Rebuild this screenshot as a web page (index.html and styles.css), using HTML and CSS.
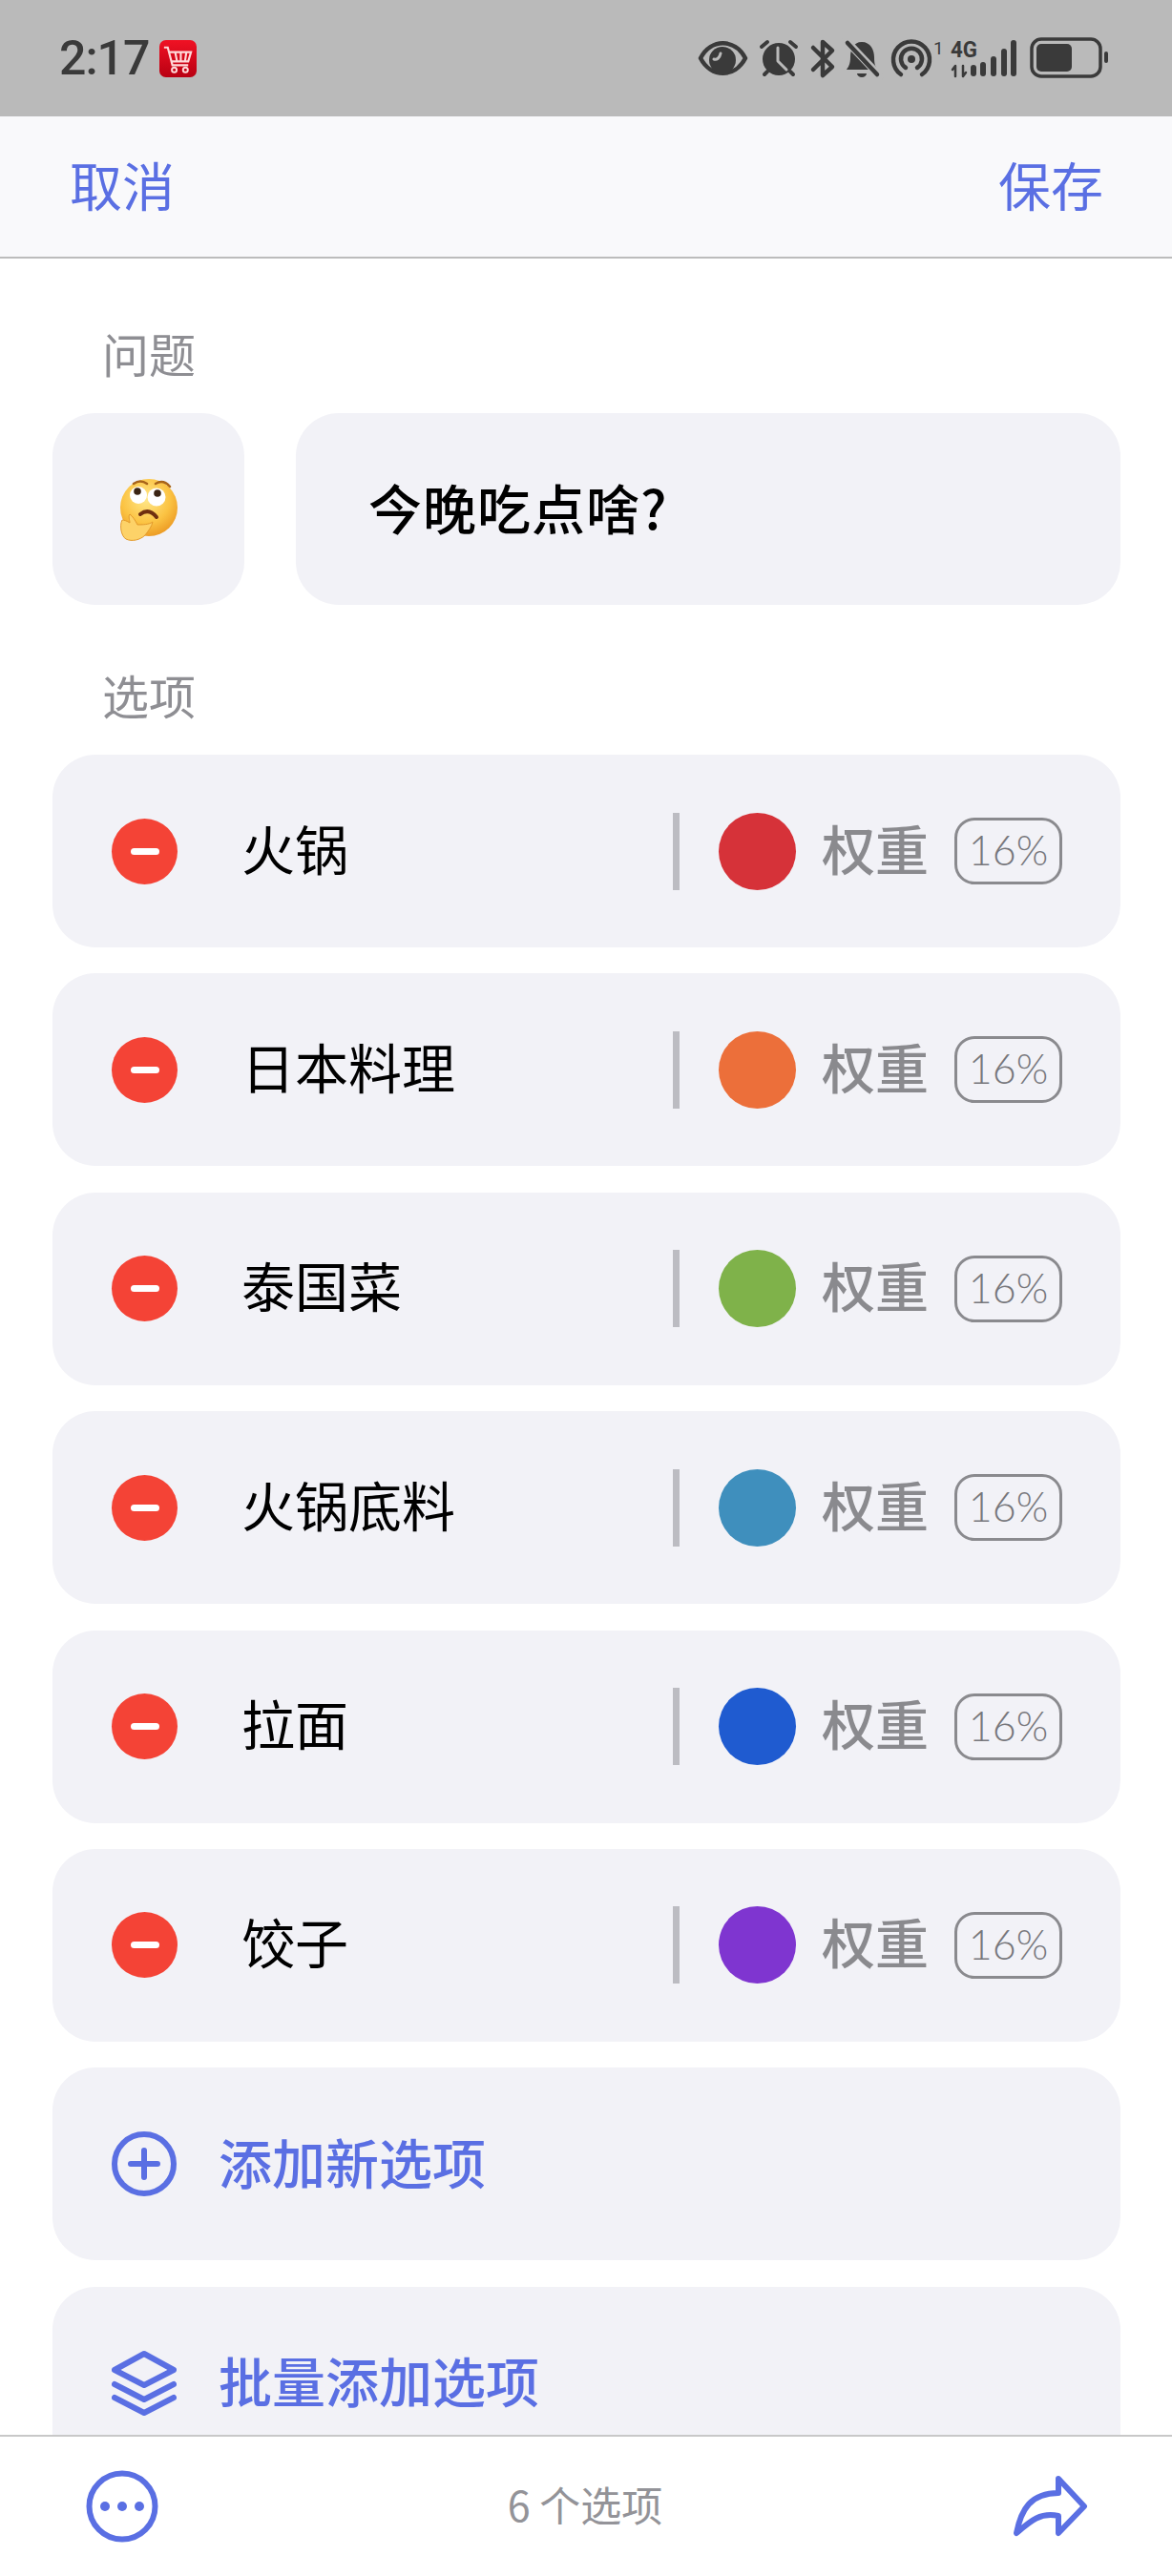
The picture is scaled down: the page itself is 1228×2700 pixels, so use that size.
FILE: index.html
```html
<!DOCTYPE html>
<html lang="zh-CN">
<head>
    <meta charset="UTF-8">
    <meta name="viewport" content="width=device-width, initial-scale=1.0">
    <title>编辑问题</title>
    <link rel="stylesheet" href="styles.css">
</head>
<body>
    <div class="page">
        <div class="status-bar">
            <span class="time">2:17</span>
            <svg class="cart-badge" viewBox="0 0 40 40">
                <defs>
                    <linearGradient id="cartRed" x1="0" y1="0" x2="0" y2="1">
                        <stop offset="0" stop-color="#f01224"/>
                        <stop offset="1" stop-color="#b90012"/>
                    </linearGradient>
                </defs>
                <rect width="40" height="40" rx="7" fill="url(#cartRed)"/>
                <path d="M5 8h4l5 19h17M11 13h23l-3 10H13.500M17 13l2 10M23 13v10M29 13l-1.500 10" fill="none" stroke="#ffd9d9" stroke-width="2.200"/>
                <circle cx="16" cy="32" r="2.600" fill="none" stroke="#ffd9d9" stroke-width="2"/>
                <circle cx="28" cy="32" r="2.600" fill="none" stroke="#ffd9d9" stroke-width="2"/>
            </svg>
            <svg class="status-icons" viewBox="728 38 437 46">
                <g fill="none" stroke="#3a3a3a" stroke-linecap="round" stroke-linejoin="round">
                    <!-- eye -->
                    <path d="M734 61C745 40 770 40 781 61C770 82 745 82 734 61Z" stroke-width="4.500"/>
                    <circle cx="757" cy="63" r="14" fill="#3a3a3a" stroke="none"/>
                    <path d="M748 62c3 1 6-1 7-6" stroke="#bababa" stroke-width="3"/>
                    <!-- alarm -->
                    <circle cx="816" cy="62" r="17" fill="#3a3a3a" stroke="none"/>
                    <path d="M815 50V64L824 73" stroke="#bababa" stroke-width="3"/>
                    <path d="M798 49L804 44M834 49L828 44M801 78L804 75M831 78L828 75" stroke-width="4"/>
                    <!-- bluetooth -->
                    <path d="M852 50L872 70L862 79V44L872 53L852 73" stroke-width="4.500"/>
                    <!-- muted bell -->
                    <path d="M903 44C894 44 891 52 891 60C891 67 889 70 887 73H920C917 70 916 67 916 60C916 52 912 44 903 44Z" fill="#3a3a3a" stroke="none"/>
                    <path d="M898 77a5 4 0 0 0 10 0" fill="#3a3a3a" stroke="none"/>
                    <path d="M886 42L922 80" stroke="#bababa" stroke-width="8"/>
                    <path d="M888 45L919 78" stroke-width="4.500"/>
                    <!-- hotspot -->
                    <path d="M944 78A19 19 0 1 1 966 78M949 71A11 11 0 1 1 961 71" stroke-width="4.500"/>
                    <circle cx="955" cy="62" r="4" fill="#3a3a3a" stroke="none"/>
                    <!-- data arrows -->
                    <path d="M1001 80V69L998 73M1009 69V80L1012 76" stroke-width="2.500"/>
                </g>
                <text x="978" y="57" class="status-small">1</text>
                <text x="996" y="60" class="status-net" textLength="28" lengthAdjust="spacingAndGlyphs">4G</text>
                <g fill="#3a3a3a">
                    <rect x="1017" y="68" width="6" height="12" rx="3"/>
                    <rect x="1027" y="65" width="6" height="15" rx="3"/>
                    <rect x="1038" y="59" width="6" height="21" rx="3"/>
                    <rect x="1049" y="51" width="6" height="29" rx="3"/>
                    <rect x="1059" y="42" width="6" height="38" rx="3"/>
                    <rect x="1086" y="46" width="37" height="29" rx="5"/>
                    <rect x="1157" y="54" width="4" height="12" rx="2"/>
                </g>
                <rect x="1081" y="41" width="72" height="39" rx="10" fill="none" stroke="#3a3a3a" stroke-width="3.500"/>
            </svg>
        </div>

        <div class="nav-bar">
            <span>取消</span>
            <span>保存</span>
        </div>

        <div class="content">
            <div class="section-label first">问题</div>
            <div class="question">
                <div class="card emoji-card">
                    <svg class="emoji" viewBox="0 0 64 66">
                        <defs>
                            <radialGradient id="face" cx="0.45" cy="0.35" r="0.7">
                                <stop offset="0" stop-color="#ffe88a"/>
                                <stop offset="0.6" stop-color="#fbc343"/>
                                <stop offset="1" stop-color="#ea951f"/>
                            </radialGradient>
                        </defs>
                        <circle cx="33" cy="31" r="30" fill="url(#face)"/>
                        <path d="M17 6q7-5 14 0M40 6q8-5 15 3" fill="none" stroke="#a8641a" stroke-width="2.500" stroke-linecap="round"/>
                        <circle cx="22" cy="18" r="9" fill="#fff"/>
                        <circle cx="41" cy="20" r="9.500" fill="#fff"/>
                        <circle cx="21" cy="14" r="3.800" fill="#3a2413"/>
                        <circle cx="42" cy="16" r="3.800" fill="#3a2413"/>
                        <path d="M24 38q9-7 17 3" fill="none" stroke="#6f2f10" stroke-width="4" stroke-linecap="round"/>
                        <path d="M5 44c-3 6-1 17 4 20c6 3 15 1 20-4c3-4 7-9 8-14c-4 3-11 3-16 3c-2-4-5-9-8-11c-2 2 0 6 0 9c-3-2-6-3-8-3z" fill="#fdd268" stroke="#e39a2c" stroke-width="1"/>
                    </svg>
                </div>
                <div class="card question-input">今晚吃点啥?</div>
            </div>

            <div class="section-label">选项</div>
            <div class="options">
                <div class="card option">
                    <span class="remove"></span>
                    <span class="option-name">火锅</span>
                    <span class="divider"></span>
                    <span class="swatch red"></span>
                    <span class="weight">权重</span>
                    <span class="percent">16%</span>
                </div>
                <div class="card option">
                    <span class="remove"></span>
                    <span class="option-name">日本料理</span>
                    <span class="divider"></span>
                    <span class="swatch orange"></span>
                    <span class="weight">权重</span>
                    <span class="percent">16%</span>
                </div>
                <div class="card option">
                    <span class="remove"></span>
                    <span class="option-name">泰国菜</span>
                    <span class="divider"></span>
                    <span class="swatch green"></span>
                    <span class="weight">权重</span>
                    <span class="percent">16%</span>
                </div>
                <div class="card option">
                    <span class="remove"></span>
                    <span class="option-name">火锅底料</span>
                    <span class="divider"></span>
                    <span class="swatch teal"></span>
                    <span class="weight">权重</span>
                    <span class="percent">16%</span>
                </div>
                <div class="card option">
                    <span class="remove"></span>
                    <span class="option-name">拉面</span>
                    <span class="divider"></span>
                    <span class="swatch blue"></span>
                    <span class="weight">权重</span>
                    <span class="percent">16%</span>
                </div>
                <div class="card option">
                    <span class="remove"></span>
                    <span class="option-name">饺子</span>
                    <span class="divider"></span>
                    <span class="swatch purple"></span>
                    <span class="weight">权重</span>
                    <span class="percent">16%</span>
                </div>
                <div class="card option action">
                    <svg class="action-icon" viewBox="0 0 68 68" fill="none" stroke="#5a6fe3" stroke-width="6" stroke-linecap="round">
                        <circle cx="34" cy="34" r="31"/>
                        <path d="M34 20V48M20 34H48"/>
                    </svg>
                    <span class="action-label">添加新选项</span>
                </div>
                <div class="card option action">
                    <svg class="action-icon" viewBox="0 0 68 68" fill="none" stroke="#5a6fe3" stroke-width="6" stroke-linecap="round" stroke-linejoin="round">
                        <path d="M34 3L65 20L34 36L3 20Z"/>
                        <path d="M3 35L34 51L65 35"/>
                        <path d="M3 49L34 65L65 49"/>
                    </svg>
                    <span class="action-label">批量添加选项</span>
                </div>
            </div>
        </div>

        <div class="bottom-bar">
            <svg class="more-icon" viewBox="0 0 76 76">
                <circle cx="38" cy="38" r="34.500" fill="none" stroke="#5a6fe3" stroke-width="6"/>
                <circle cx="20" cy="38" r="5" fill="#5a6fe3"/>
                <circle cx="38" cy="38" r="5" fill="#5a6fe3"/>
                <circle cx="56" cy="38" r="5" fill="#5a6fe3"/>
            </svg>
            <span class="count">6 个选项</span>
            <svg class="share-icon" viewBox="160 92 82 70">
                <path d="M209 98L236 127L209 155V137C190 133 180 142 165 155C170 130 180 113 209 113Z" fill="none" stroke="#5a6fe3" stroke-width="6" stroke-linejoin="round"/>
            </svg>
        </div>
    </div>
</body>
</html>
```

FILE: styles.css
```css
* {
    box-sizing: border-box;
}
body {
    margin: 0;
    background-color: #fff;
    font-family: "Noto Sans CJK SC", "Noto Sans", sans-serif;
    color: #000;
}
.page {
    width: 1228px;
    height: 2700px;
    display: flex;
    flex-direction: column;
    overflow: hidden;
}
.status-bar {
    height: 122px;
    flex-shrink: 0;
    background-color: #bababa;
    display: flex;
    align-items: center;
    padding-left: 62px;
}
.time {
    font-family: Roboto, sans-serif;
    font-size: 50px;
    font-weight: 500;
    letter-spacing: -1px;
    line-height: 50px;
    color: #3a3a3a;
    width: 105px;
}
.cart-badge {
    width: 39px;
    height: 39px;
}
.status-icons {
    width: 437px;
    height: 46px;
    margin-left: 522px;
}
.status-small {
    font-family: Roboto, sans-serif;
    font-size: 19px;
    fill: #3a3a3a;
}
.status-net {
    font-family: Roboto, sans-serif;
    font-size: 24px;
    font-weight: 700;
    fill: #3a3a3a;
}
.nav-bar {
    height: 149px;
    flex-shrink: 0;
    background-color: #f9f9fb;
    border-bottom: 2px solid #bcbcbc;
    display: flex;
    justify-content: space-between;
    align-items: center;
    padding: 0 72px 8px 73px;
    font-size: 55px;
    color: #5a6fe3;
}
.content {
    flex: 1;
    min-height: 0;
    overflow: hidden;
    padding: 0 54px 0 55px;
}
.section-label {
    height: 60px;
    line-height: 56px;
    font-size: 49px;
    color: #8e8e93;
    padding-left: 52px;
    margin: 66px 0 31px;
}
.section-label.first {
    margin-top: 71px;
}
.card {
    background-color: #f2f2f7;
    border-radius: 45px;
}
.question {
    display: flex;
    gap: 54px;
    height: 201px;
}
.emoji-card {
    width: 201px;
    flex-shrink: 0;
    display: flex;
    align-items: center;
    justify-content: center;
}
.emoji {
    width: 64px;
    height: 66px;
    margin-left: -2px;
}
.question-input {
    flex: 1;
    display: flex;
    align-items: center;
    padding: 0 0 6px 76px;
    font-size: 56px;
    font-weight: 500;
    letter-spacing: 1px;
}
.options {
    display: flex;
    flex-direction: column;
    gap: 27.4px;
}
.option {
    height: 202px;
    flex-shrink: 0;
    display: flex;
    align-items: center;
    padding: 0 61px 0 62px;
    font-size: 56px;
}
.remove {
    width: 69px;
    height: 69px;
    flex-shrink: 0;
    border-radius: 50%;
    background-color: #f44336;
    display: flex;
    align-items: center;
    justify-content: center;
}
.remove::after {
    content: "";
    width: 30px;
    height: 7px;
    border-radius: 4px;
    background-color: #fff;
}
.option-name {
    flex: 1;
    margin-left: 67px;
    padding-bottom: 10px;
}
.divider {
    width: 7px;
    height: 81px;
    background-color: #bcbcc2;
}
.swatch {
    width: 81px;
    height: 81px;
    border-radius: 50%;
    margin-left: 41px;
}
.red { background-color: #d63239; }
.orange { background-color: #ec6f3a; }
.green { background-color: #7fb24a; }
.teal { background-color: #3f8fbd; }
.blue { background-color: #1f5bd0; }
.purple { background-color: #7f35d0; }
.weight {
    margin-left: 27px;
    width: 112px;
    padding-bottom: 10px;
    font-weight: 500;
    color: #8a8a8e;
}
.percent {
    width: 113px;
    height: 70px;
    margin-left: 27px;
    padding-bottom: 3px;
    border: 3px solid #8a8a8e;
    border-radius: 21px;
    display: flex;
    align-items: center;
    justify-content: center;
    font-family: Lato, sans-serif;
    font-weight: 300;
    font-size: 43px;
    color: #77777c;
}
.action {
    font-weight: 500;
    color: #5a6fe3;
}
.action-icon {
    width: 68px;
    height: 68px;
    flex-shrink: 0;
    margin-right: 44px;
}
.action-label {
    padding-bottom: 8px;
}
.bottom-bar {
    height: 148px;
    flex-shrink: 0;
    background-color: #fff;
    border-top: 2px solid #c8c8c8;
    display: flex;
    align-items: center;
    justify-content: space-between;
    padding: 0 91px 0 90px;
}
.more-icon {
    width: 76px;
    height: 76px;
}
.count {
    font-size: 43px;
    color: #939398;
    padding-bottom: 6px;
}
.share-icon {
    width: 82px;
    height: 70px;
    margin-right: -5px;
}
```
